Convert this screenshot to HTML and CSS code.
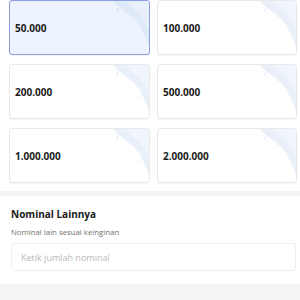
FILE: index.html
```html
<!DOCTYPE html>
<html>
<head>
  <meta charset="UTF-8">
  <title>Nominal</title>
  <link rel="stylesheet" href="styles.css">
</head>
<body>
  <!-- pilihan nominal -->
  <div class="grid">
    <div class="card selected">
      <span class="amount">50.000</span>
      <svg class="deco" viewBox="0 0 40 56"><path d="M4 0 C10 8 20 12 27 20 C33 27 36 36 40 46 L40 0 Z" fill="#dfeaf9"/><path d="M16 0 C22 6 30 10 34 18 C37 23 39 27 40 30 L40 0 Z" fill="#e8f0fb"/><path d="M7 9 h3 M8.5 7.5 v3" stroke="#cdd8ef" stroke-width="0.6"/><circle cx="34" cy="6" r="0.8" fill="#fff"/><circle cx="30" cy="33" r="0.6" fill="#cdd8ef"/><circle cx="34" cy="30" r="0.5" fill="#cdd8ef"/></svg>
    </div>
    <div class="card">
      <span class="amount">100.000</span>
      <svg class="deco" viewBox="0 0 40 56"><path d="M4 0 C10 8 20 12 27 20 C33 27 36 36 40 46 L40 0 Z" fill="#e9f0fa"/><path d="M16 0 C22 6 30 10 34 18 C37 23 39 27 40 30 L40 0 Z" fill="#f1f5fc"/><path d="M7 9 h3 M8.5 7.5 v3" stroke="#dbe3f1" stroke-width="0.6"/><circle cx="34" cy="6" r="0.8" fill="#fff"/><circle cx="30" cy="33" r="0.6" fill="#dbe3f1"/><circle cx="34" cy="30" r="0.5" fill="#dbe3f1"/></svg>
    </div>
    <div class="card">
      <span class="amount">200.000</span>
      <svg class="deco" viewBox="0 0 40 56"><path d="M4 0 C10 8 20 12 27 20 C33 27 36 36 40 46 L40 0 Z" fill="#e9f0fa"/><path d="M16 0 C22 6 30 10 34 18 C37 23 39 27 40 30 L40 0 Z" fill="#f1f5fc"/><path d="M7 9 h3 M8.5 7.5 v3" stroke="#dbe3f1" stroke-width="0.6"/><circle cx="34" cy="6" r="0.8" fill="#fff"/><circle cx="30" cy="33" r="0.6" fill="#dbe3f1"/><circle cx="34" cy="30" r="0.5" fill="#dbe3f1"/></svg>
    </div>
    <div class="card">
      <span class="amount">500.000</span>
      <svg class="deco" viewBox="0 0 40 56"><path d="M4 0 C10 8 20 12 27 20 C33 27 36 36 40 46 L40 0 Z" fill="#e9f0fa"/><path d="M16 0 C22 6 30 10 34 18 C37 23 39 27 40 30 L40 0 Z" fill="#f1f5fc"/><path d="M7 9 h3 M8.5 7.5 v3" stroke="#dbe3f1" stroke-width="0.6"/><circle cx="34" cy="6" r="0.8" fill="#fff"/><circle cx="30" cy="33" r="0.6" fill="#dbe3f1"/><circle cx="34" cy="30" r="0.5" fill="#dbe3f1"/></svg>
    </div>
    <div class="card">
      <span class="amount">1.000.000</span>
      <svg class="deco" viewBox="0 0 40 56"><path d="M4 0 C10 8 20 12 27 20 C33 27 36 36 40 46 L40 0 Z" fill="#e9f0fa"/><path d="M16 0 C22 6 30 10 34 18 C37 23 39 27 40 30 L40 0 Z" fill="#f1f5fc"/><path d="M7 9 h3 M8.5 7.5 v3" stroke="#dbe3f1" stroke-width="0.6"/><circle cx="34" cy="6" r="0.8" fill="#fff"/><circle cx="30" cy="33" r="0.6" fill="#dbe3f1"/><circle cx="34" cy="30" r="0.5" fill="#dbe3f1"/></svg>
    </div>
    <div class="card">
      <span class="amount">2.000.000</span>
      <svg class="deco" viewBox="0 0 40 56"><path d="M4 0 C10 8 20 12 27 20 C33 27 36 36 40 46 L40 0 Z" fill="#e9f0fa"/><path d="M16 0 C22 6 30 10 34 18 C37 23 39 27 40 30 L40 0 Z" fill="#f1f5fc"/><path d="M7 9 h3 M8.5 7.5 v3" stroke="#dbe3f1" stroke-width="0.6"/><circle cx="34" cy="6" r="0.8" fill="#fff"/><circle cx="30" cy="33" r="0.6" fill="#dbe3f1"/><circle cx="34" cy="30" r="0.5" fill="#dbe3f1"/></svg>
    </div>
  </div>

  <div class="divider"></div>

  <!-- nominal lain -->
  <div class="other">
    <div class="other-title">Nominal Lainnya</div>
    <div class="other-sub">Nominal lain sesuai keinginan</div>
    <input class="other-input" type="text" placeholder="Ketik jumlah nominal">
  </div>

  <div class="footer"></div>
</body>
</html>
```

FILE: styles.css
```css
body {
  margin: 0;
  font-family: "Open Sans", Lato, sans-serif;
  color: #1a1a1a;
  background: #fff;
}
.grid {
  display: grid;
  grid-template-columns: 141px 140px;
  column-gap: 7px;
  row-gap: 9px;
  padding: 0 3px 0 9px;
}
.card {
  position: relative;
  height: 53px;
  border: 1px solid #e9e9e9;
  border-radius: 3px;
  background: #fff;
  box-shadow: 0 1px 1px rgba(0, 0, 0, 0.04);
  display: flex;
  align-items: center;
  padding-left: 5px;
  overflow: hidden;
}
.card.selected {
  background: #eef4ff;
  border-color: #8c9fe4;
}
.amount {
  font-size: 10px;
  font-weight: 700;
  position: relative;
  z-index: 1;
}
.deco {
  position: absolute;
  top: 0;
  right: 0;
  width: 40px;
  height: 56px;
}
.divider {
  height: 5px;
  background: #f5f5f5;
  margin-top: 8px;
}
.other {
  padding: 11px 4px 13px 11px;
}
.other-title {
  font-size: 10px;
  font-weight: 700;
  line-height: 15px;
}
.other-sub {
  font-size: 7.8px;
  color: #707070;
  margin-top: 5px;
  line-height: 10px;
}
.other-input {
  display: block;
  width: 100%;
  height: 28px;
  margin-top: 6px;
  box-sizing: border-box;
  border: 1px solid #eeeeee;
  border-radius: 3px;
  padding: 0 9px;
  font-family: "Open Sans", Lato, sans-serif;
  font-size: 9px;
  outline: none;
}
.other-input::placeholder {
  color: #b9b9b9;
}
.footer {
  height: 20px;
  background: #f5f5f5;
}
```
